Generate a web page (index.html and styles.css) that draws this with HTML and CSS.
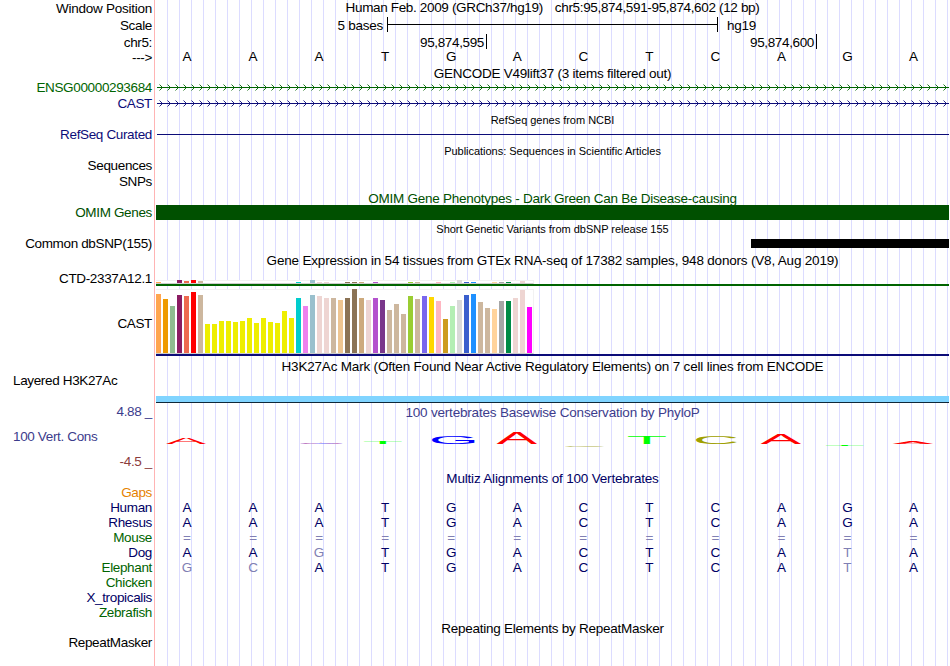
FILE: index.html
```html
<!DOCTYPE html>
<html lang="en">
<head>
  <meta charset="UTF-8">
  <title>Human chr5:95,874,591-95,874,602 Genome Browser</title>
  <link rel="stylesheet" href="styles.css">
</head>
<body>
  <div class="browser">
    <div class="row h17">
      <div class="label window">Window Position</div>
      <div class="track title position"><span>Human Feb. 2009 (GRCh37/hg19)</span><span>chr5:95,874,591-95,874,602 (12 bp)</span></div>
    </div>
    <div class="row h17">
      <div class="label">Scale</div>
      <div class="track scale">
        <span class="scale-text">5 bases</span>
        <span class="scale-bar"></span>
        <span>hg19</span>
      </div>
    </div>
    <div class="row h14">
      <div class="label">chr5:</div>
      <div class="track ruler"><span class="tick first">95,874,595</span><span class="tick">95,874,600</span></div>
    </div>
    <div class="row h17">
      <div class="label strand">---&gt;</div>
      <div class="track bases" data-bases="AAATGACTCAGA"></div>
    </div>

    <div class="row h14"><div class="label"></div><div class="track title">GENCODE V49lift37 (3 items filtered out)</div></div>
    <div class="row h16 green">
      <div class="label">ENSG00000293684</div>
      <div class="track gene arrows"></div>
    </div>
    <div class="row h16 navy">
      <div class="label">CAST</div>
      <div class="track gene arrows"></div>
    </div>

    <div class="row h15"><div class="label"></div><div class="track title small">RefSeq genes from NCBI</div></div>
    <div class="row h16 navy">
      <div class="label">RefSeq Curated</div>
      <div class="track gene"></div>
    </div>

    <div class="row h15"><div class="label"></div><div class="track title small">Publications: Sequences in Scientific Articles</div></div>
    <div class="row h16"><div class="label">Sequences</div></div>
    <div class="row h17"><div class="label">SNPs</div></div>

    <div class="row h14"><div class="label"></div><div class="track title omim-title">OMIM Gene Phenotypes - Dark Green Can Be Disease-causing</div></div>
    <div class="row h15 omim">
      <div class="label">OMIM Genes</div>
      <div class="track omim-bar"></div>
    </div>

    <div class="row h16"><div class="label"></div><div class="track title small snp-title">Short Genetic Variants from dbSNP release 155</div></div>
    <div class="row h17">
      <div class="label">Common dbSNP(155)</div>
      <div class="track snp"><div class="snp-bar"></div></div>
    </div>

    <div class="row h18"><div class="label"></div><div class="track title wide">Gene Expression in 54 tissues from GTEx RNA-seq of 17382 samples, 948 donors (V8, Aug 2019)</div></div>
    <div class="row h15">
      <div class="label">CTD-2337A12.1</div>
      <div class="track gtex gtex-low"><div class="bars" id="gtexLow"></div></div>
    </div>
    <div class="row h70">
      <div class="label gtex-label">CAST</div>
      <div class="track gtex gtex-high"><div class="bars" id="gtexHigh"></div></div>
    </div>

    <div class="row h17"><div class="label"></div><div class="track title wide h3k-title">H3K27Ac Mark (Often Found Near Active Regulatory Elements) on 7 cell lines from ENCODE</div></div>
    <div class="row h30">
      <div class="label left">Layered H3K27Ac</div>
      <div class="track h3k"><div class="h3k-bar"></div></div>
    </div>

    <div class="row h68">
      <div class="label cons-label">
        <span class="max">4.88 _</span>
        <span class="name">100 Vert. Cons</span>
        <span class="min">-4.5 _</span>
      </div>
      <div class="track cons">
        <div class="title wide cons-title">100 vertebrates Basewise Conservation by PhyloP</div>
        <svg class="logo" id="logo" width="793" height="40" viewBox="156 420 793 40"></svg>
      </div>
    </div>

    <div class="row h14"><div class="label"></div><div class="track title wide multiz-title">Multiz Alignments of 100 Vertebrates</div></div>
    <div class="row h15"><div class="label gaps">Gaps</div></div>
    <div class="row h15 align"><div class="label">Human</div><div class="track bases" data-bases="AAATGACTCAGA"></div></div>
    <div class="row h15 align"><div class="label">Rhesus</div><div class="track bases" data-bases="AAATGACTCAGA"></div></div>
    <div class="row h15 align alt"><div class="label">Mouse</div><div class="track bases" data-bases="============"></div></div>
    <div class="row h15 align"><div class="label">Dog</div><div class="track bases" data-bases="AAgTGACTCAtA"></div></div>
    <div class="row h15 align alt"><div class="label">Elephant</div><div class="track bases" data-bases="gcATGACTCAtA"></div></div>
    <div class="row h15 align alt"><div class="label">Chicken</div></div>
    <div class="row h15 align"><div class="label">X_tropicalis</div></div>
    <div class="row h15 align alt"><div class="label">Zebrafish</div></div>

    <div class="row h15"><div class="label"></div><div class="track title repeat-title">Repeating Elements by RepeatMasker</div></div>
    <div class="row h16"><div class="label">RepeatMasker</div></div>
  </div>
  <script src="script.js"></script>
</body>
</html>
```

FILE: styles.css
```css
body {
  margin: 0;
  background: #fff;
  font-family: "Liberation Sans", Arial, sans-serif;
  font-size: 13.5px;
  letter-spacing: -0.25px;
  line-height: 15px;
  color: #000;
  overflow: hidden;
}
.browser {
  box-sizing: border-box;
  width: 949px;
  height: 666px;
  padding-top: 1px;
  /* left border of the tracks, then a guide line every 12px */
  background:
    linear-gradient(#ffb4b4, #ffb4b4) 154px 0 / 1px 100% no-repeat,
    repeating-linear-gradient(to right, transparent 0 11px, #dcdcff 11px 12px) 156px 0 / 793px 100% no-repeat;
}
.row {
  display: flex;
  gap: 4px;
}
.h14 { height: 14px; }
.h15 { height: 15px; }
.h16 { height: 16px; }
.h17 { height: 17px; }
.h18 { height: 18px; }
.h30 { height: 30px; }
.h68 { height: 68px; }
.h70 { height: 70px; }

.label {
  width: 152px;
  flex: none;
  text-align: right;
  white-space: nowrap;
  letter-spacing: -0.35px;
}
.window {
  letter-spacing: -0.25px;
}
.left {
  box-sizing: border-box;
  padding-left: 13px;
  text-align: left;
}
.track {
  width: 793px;
  flex: none;
  white-space: nowrap;
}
.title {
  text-align: center;
}
.wide {
  letter-spacing: -0.19px;
}
.small {
  font-size: 11px;
  letter-spacing: -0.02px;
  line-height: 17px;
}
.green { color: #006400; }
.navy { color: #0c0c78; }

.position {
  display: flex;
  justify-content: center;
  gap: 12px;
  margin-top: -1px;
  letter-spacing: -0.34px;
}
.scale {
  display: flex;
}
.scale-text {
  width: 227px;
  margin-right: 4px;
  text-align: right;
}
.scale-bar {
  width: 329px;
  height: 15px;
  margin: -1px 9px 0 0;
  border: solid #000;
  border-width: 0 1px;
  background: linear-gradient(#000, #000) 0 7px / 100% 1px no-repeat;
}
.ruler {
  display: flex;
  letter-spacing: -0.36px;
}
.tick {
  box-sizing: border-box;
  width: 330px;
  height: 15px;
  margin-top: -1px;
  padding: 1px 2px 0 0;
  border-right: 1px solid #000;
  text-align: right;
}
.tick.first {
  width: 331px;
}
.strand {
  padding-top: 1px;
}
.bases {
  display: grid;
  grid-template-columns: repeat(12, 66.05px);
  margin-left: -2px;
  letter-spacing: 0;
  text-align: center;
}

.gene {
  height: 15px;
  margin-left: 1px;
  width: 792px;
  background: linear-gradient(currentColor, currentColor) 0 7px / 100% 1px no-repeat;
}
.gene svg {
  display: block;
}

.omim {
  color: #005000;
}
.omim-title {
  color: #005000;
}
.omim-bar {
  background: #005000;
}
.snp-title {
  padding-top: 1px;
}
.snp {
  display: flex;
  justify-content: flex-end;
  padding-top: 3px;
}
.snp-bar {
  width: 198px;
  height: 9px;
  background: #000;
}

.gtex {
  box-sizing: border-box;
  display: flex;
}
.gtex-low {
  padding-top: 9px;
  border-bottom: 2px solid #006400;
}
.gtex-high {
  padding-top: 3px;
  border-bottom: 2px solid #0c0c78;
}
.gtex-label {
  padding-top: 30px;
}
.bars {
  box-sizing: border-box;
  display: flex;
  align-items: flex-end;
  gap: 2px;
  width: 378px;
  background: #fff;
  border: solid #f2f2f2;
  border-width: 1px 1px 1px 0;
  border-bottom-color: #ccc;
}
.bar {
  width: 5px;
  flex: none;
}
.h3k-title {
  padding-top: 3px;
}
.h3k {
  display: flex;
  align-items: flex-end;
}
.h3k-bar {
  width: 100%;
  height: 6px;
  background: #80d4ff;
  border-bottom: 1px solid #102838;
}

.cons-label {
  display: flex;
  flex-direction: column;
  color: #3c3c8c;
}
.max {
  padding: 1px 0 10px;
}
.name {
  padding-left: 13px;
  text-align: left;
}
.min {
  padding-top: 10px;
  color: #8c3c3c;
}
.cons-title {
  padding-top: 2px;
  color: #3c3c8c;
}
.logo {
  display: block;
  font-size: 10px;
  letter-spacing: 0;
}
.multiz-title,
.align {
  color: #000064;
}
.alt .label {
  color: #006400;
}
.gaps {
  color: #e68200;
}
.mismatch {
  color: #8080b4;
}
.repeat-title {
  padding-top: 1px;
}
```

FILE: script.js
```js
const svgNS = 'http://www.w3.org/2000/svg';

// lower case and "=" mark a base that differs from human
document.querySelectorAll('.bases').forEach(track => {
  for (const base of track.dataset.bases) {
    const cell = document.createElement('span');
    cell.textContent = base.toUpperCase();
    if (base === '=' || base !== base.toUpperCase()) {
      cell.className = 'mismatch';
    }
    track.appendChild(cell);
  }
});

// strand arrows
document.querySelectorAll('.arrows').forEach(track => {
  let d = '';
  for (let x = 2.5; x < 790; x += 8) {
    d += `M${x} 4.5l3 3l-3 3`;
  }
  track.innerHTML = `<svg width="792" height="15"><path d="${d}" fill="none" stroke="currentColor" stroke-width="0.9"/></svg>`;
});

// tissue expression: colour, CAST height, CTD-2337A12.1 height
const tissues = [
  ['#ffa54f', 59, 1], ['#ee9a00', 54, 0], ['#8fbc8f', 47, 0], ['#8b1c62', 58, 3],
  ['#ee6a50', 57, 2], ['#ff0000', 61, 3], ['#cdb79e', 58, 2], ['#eeee00', 29, 0],
  ['#eeee00', 29, 0], ['#eeee00', 32, 0], ['#eeee00', 32, 0], ['#eeee00', 31, 0],
  ['#eeee00', 32, 0], ['#eeee00', 35, 0], ['#eeee00', 30, 0], ['#eeee00', 35, 0],
  ['#eeee00', 31, 0], ['#eeee00', 30, 0], ['#eeee00', 42, 0], ['#eeee00', 35, 0],
  ['#00cdcd', 55, 1], ['#ee82ee', 47, 0], ['#9ac0cd', 58, 3], ['#eed5d2', 57, 1],
  ['#eed5d2', 55, 1], ['#cdb79e', 55, 0], ['#eec591', 53, 0], ['#8b7355', 55, 1],
  ['#8b7355', 64, 1], ['#cdaa7d', 55, 1], ['#eed5d2', 53, 0], ['#b452cd', 55, 1],
  ['#7a378b', 53, 0], ['#cdb79e', 43, 0], ['#cdb79e', 49, 0], ['#cdb79e', 39, 0],
  ['#9acd32', 57, 1], ['#cdb79e', 54, 1], ['#7a67ee', 57, 0], ['#ffd700', 56, 0],
  ['#ffb6c1', 52, 1], ['#cd9b1d', 34, 0], ['#b4eeb4', 47, 1], ['#d9d9d9', 53, 3],
  ['#3a5fcd', 58, 1], ['#1e90ff', 59, 1], ['#cdb79e', 51, 0], ['#cdb79e', 45, 0],
  ['#ffd39b', 44, 1], ['#a6a6a6', 52, 1], ['#008b45', 52, 1], ['#eed5d2', 55, 0],
  ['#eed5d2', 63, 2], ['#ff00ff', 46, 0]
];

function drawBars(id, column) {
  const box = document.getElementById(id);
  tissues.forEach(tissue => {
    const bar = document.createElement('div');
    bar.className = 'bar';
    bar.style.background = tissue[0];
    bar.style.height = tissue[column] + 'px';
    box.appendChild(bar);
  });
}
drawBars('gtexHigh', 1);
drawBars('gtexLow', 2);

// conservation letters: base, colour, left, right, top, bottom
const letters = [
  ['A', '#ff0000', 166, 206, 438, 444],
  ['G', '#6464ff', 300, 343, 443, 444],
  ['A', '#ff5050', 300, 343, 442, 443.5],
  ['T', '#00ff00', 364, 402, 442, 444],
  ['G', '#0000ff', 432, 475, 436, 444],
  ['A', '#ff0000', 496.5, 537, 433, 444],
  ['C', '#b4b450', 565, 605, 445.2, 446.8],
  ['T', '#00ff00', 628, 666, 436, 444],
  ['C', '#a0a000', 696, 737, 436, 444],
  ['A', '#ff0000', 760.5, 801, 434, 444],
  ['T', '#00ff00', 826, 864, 445, 446],
  ['A', '#ff0000', 892.5, 933, 442, 444]
];
// left edge and width of each glyph at 10px
const ink = {
  A: [0.02, 6.63],
  C: [0.5, 6.37],
  G: [0.5, 6.64],
  T: [0.21, 5.69]
};

letters.forEach(([base, color, left, right, top, bottom]) => {
  const text = document.createElementNS(svgNS, 'text');
  const sx = (right - left) / ink[base][1];
  const sy = (bottom - top) / 6.88;
  text.setAttribute('transform', `translate(${left - ink[base][0] * sx} ${bottom}) scale(${sx} ${sy})`);
  text.setAttribute('fill', color);
  text.textContent = base;
  document.getElementById('logo').appendChild(text);
});
```
